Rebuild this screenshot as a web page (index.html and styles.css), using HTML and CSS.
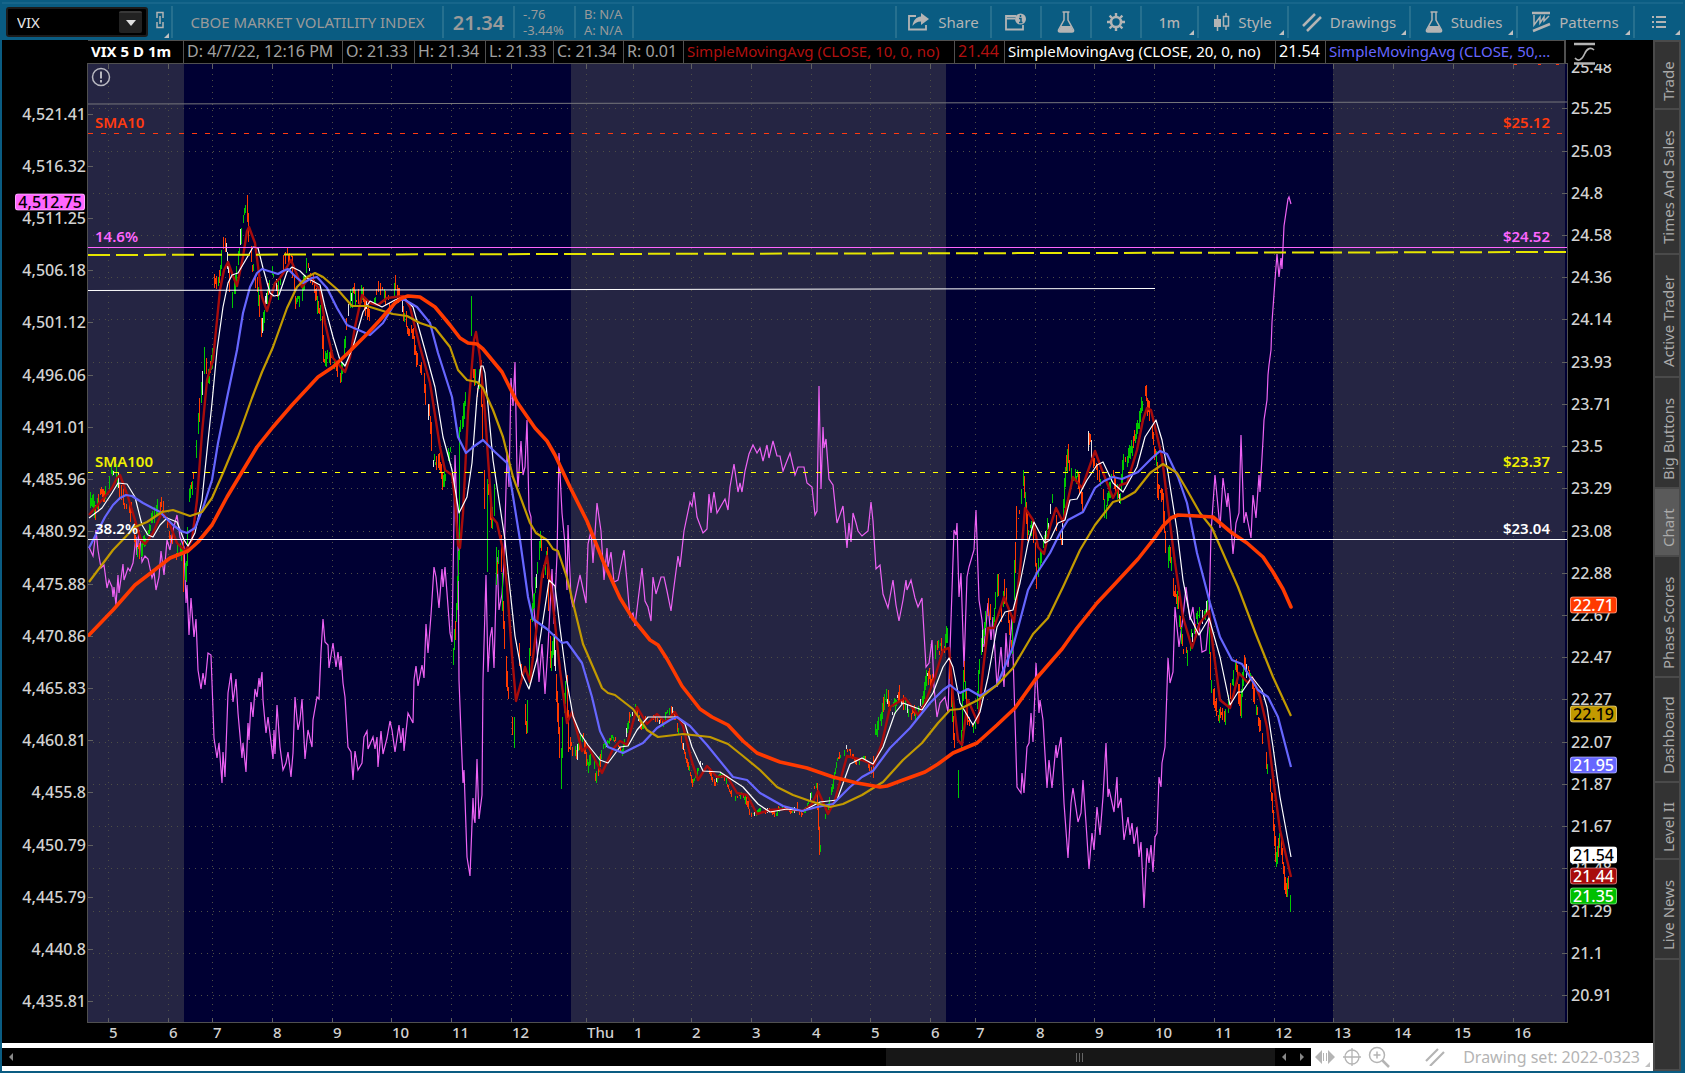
FILE: index.html
```html
<!DOCTYPE html>
<html lang="en">
<head>
    <meta charset="UTF-8">
    <meta name="viewport" content="width=device-width, initial-scale=1.0">
    <title>VIX 5 D 1m</title>
    <link rel="stylesheet" href="styles.css">
</head>
<body>
    <header class="toolbar">
        <div class="tool symbol">
            <div class="symbol-box">
                <input type="text" id="symbol" value="VIX" aria-label="Symbol">
                <button type="button" class="drop" aria-label="Symbol list"></button>
            </div>
            <button type="button" class="link more" aria-label="Link">
                <svg width="8" height="18" viewBox="0 0 8 18"><path d="M1 7V1.500H7V7M1 11V16.500H7V11M4 5V13" fill="none" stroke="#b4b4b4" stroke-width="1.500"/></svg>
            </button>
        </div>
        <div class="tool name">CBOE MARKET VOLATILITY INDEX</div>
        <div class="tool last">21.34</div>
        <div class="tool pair change"><span>-.76</span><span>-3.44%</span></div>
        <div class="tool pair bid"><span>B: N/A</span><span>A: N/A</span></div>
        <div class="tool space"></div>
        <button type="button" class="tool share">
            <svg width="22" height="18" viewBox="0 0 22 18"><path d="M8 3H1V16.500H18V12" fill="none" stroke="#b4b4b4" stroke-width="1.800"/><path d="M13 0L21 6L13 12V8.500C9 8.500 7 10 4.500 13C5 8 8 4 13 3.600Z" fill="#b4b4b4"/></svg>
            Share
        </button>
        <button type="button" class="tool icon" aria-label="Info">
            <svg width="22" height="18" viewBox="0 0 22 18"><path d="M11 3H1V16.500H18V12M1 5.500H10" fill="none" stroke="#b4b4b4" stroke-width="1.800"/><circle cx="15.500" cy="6" r="5.500" fill="#b4b4b4"/><path d="M15.500 2V4M14 5.500H16V9.500M14 9.500H17.500" stroke="#0a5c82" stroke-width="1.500" fill="none"/></svg>
        </button>
        <button type="button" class="tool icon" aria-label="Study">
            <svg width="18" height="22" viewBox="0 0 18 22"><path d="M5.500 1H12.500M7 1V9L1.500 19Q1 21 3 21H15Q17 21 16.500 19L11 9V1" fill="none" stroke="#b4b4b4" stroke-width="1.500"/><path d="M4 15H14L17 21H1Z" fill="#b4b4b4"/></svg>
        </button>
        <button type="button" class="tool icon" aria-label="Settings">
            <svg width="20" height="20" viewBox="0 0 20 20"><circle cx="10" cy="10" r="5" fill="none" stroke="#b4b4b4" stroke-width="2.600"/><path d="M10 1V4M10 16V19M1 10H4M16 10H19M3.600 3.600L6 6M14 14L16.400 16.400M3.600 16.400L6 14M14 6L16.400 3.600" stroke="#b4b4b4" stroke-width="2.400"/></svg>
        </button>
        <button type="button" class="tool minute more">1m</button>
        <button type="button" class="tool style more">
            <svg width="16" height="18" viewBox="0 0 16 18"><path d="M3.500 2V18M12 0V3M12 13V17" stroke="#b4b4b4" stroke-width="1.500"/><path d="M0 6H7V14H0Z" fill="#b4b4b4"/><path d="M9.500 3.500H14.500V13H9.500Z" fill="none" stroke="#b4b4b4" stroke-width="1.500"/></svg>
            Style
        </button>
        <button type="button" class="tool drawings more">
            <svg width="20" height="20" viewBox="0 0 20 20"><path d="M1 14L13 2M5 19L19 5" stroke="#b4b4b4" stroke-width="2.500"/></svg>
            Drawings
        </button>
        <button type="button" class="tool studies more">
            <svg width="18" height="22" viewBox="0 0 18 22"><path d="M5.500 1H12.500M7 1V9L1.500 19Q1 21 3 21H15Q17 21 16.500 19L11 9V1" fill="none" stroke="#b4b4b4" stroke-width="1.500"/><path d="M4 15H14L17 21H1Z" fill="#b4b4b4"/></svg>
            Studies
        </button>
        <button type="button" class="tool patterns more">
            <svg width="19" height="22" viewBox="0 0 19 22"><path d="M0 2H18M1 20L18 13" stroke="#b4b4b4" stroke-width="2.500"/><path d="M2 4V14L8 6V12L12 6V10L17 5" fill="none" stroke="#b4b4b4" stroke-width="1.500"/></svg>
            Patterns
        </button>
        <button type="button" class="tool menu more" aria-label="Menu">
            <svg width="14" height="14" viewBox="0 0 14 14"><path d="M0 2H2M4 2H14M0 7H2M4 7H14M0 12H2M4 12H14" stroke="#b4b4b4" stroke-width="1.800"/></svg>
        </button>
    </header>

    <main class="workspace">
        <section class="chart">
            <div class="corner"></div>
            <div class="info">
                <span class="title">VIX 5 D 1m</span>
                <span>D: 4/7/22, 12:16 PM</span>
                <span>O: 21.33</span>
                <span>H: 21.34</span>
                <span>L: 21.33</span>
                <span>C: 21.34</span>
                <span>R: 0.01</span>
                <span class="study sma10">SimpleMovingAvg (CLOSE, 10, 0, no)</span>
                <span class="sma10">21.44</span>
                <span class="study sma20">SimpleMovingAvg (CLOSE, 20, 0, no)</span>
                <span class="sma20">21.54</span>
                <span class="study sma50">SimpleMovingAvg (CLOSE, 50,...</span>
            </div>
            <div class="scale-icon">
                <svg width="22" height="24" viewBox="0 0 22 24"><path d="M0 2H21M0 21.500H21" stroke="#b4b4b4" stroke-width="2.500"/><path d="M1 16C4 20 8 18 10.500 12C13 6 17 5 20 8" fill="none" stroke="#b4b4b4" stroke-width="1.600"/></svg>
            </div>

            <div class="axis left" id="leftAxis"></div>
            <div class="plot" id="plot">
                <svg class="canvas" viewBox="88 64 1479 958" preserveAspectRatio="none">
                    <!-- extended hours -->
                    <g fill="#252543">
                        <rect x="88" y="64" width="96" height="958"/>
                        <rect x="571" y="64" width="375" height="958"/>
                        <rect x="1333" y="64" width="232" height="958"/>
                    </g>
                    <g id="grid"></g>

                    <!-- /ES overlay -->
                    <polyline class="es" points="89,547 93,556 96,530 98,550 101,568 104,565 107,588 109,580 112,587 113,597 114,587 116,605 118,575 119,593 123,564 124,580 128,568 130,571 133,563 136,537 137,555 139,530 141,547 142,562 145,556 148,559 152,578 154,572 156,590 159,577 161,551 164,575 167,540 170,550 173,530 177,515 180,537 184,547 186,603 187,585 189,635 191,598 194,637 196,619 198,670 201,689 203,673 205,685 208,653 211,655 214,738 217,758 219,743 222,783 223,752 225,777 228,693 231,673 233,702 236,679 238,713 242,758 243,743 246,772 248,723 249,740 251,702 253,717 255,689 257,697 259,678 260,687 262,672 263,700 266,733 268,717 273,759 274,730 275,754 277,705 280,747 283,770 286,763 288,752 291,777 293,753 295,697 298,730 300,720 302,699 305,759 308,730 312,747 313,720 317,697 319,699 321,652 323,619 325,642 328,645 329,668 333,643 336,667 338,652 340,670 341,656 343,683 345,697 348,747 351,752 353,780 355,751 358,770 362,763 364,737 367,731 368,749 373,737 375,749 377,737 378,767 381,731 383,754 387,738 390,721 392,730 395,752 399,725 401,743 403,728 404,751 408,713 413,723 414,680 416,666 418,686 422,665 424,678 426,624 428,653 431,615 434,567 436,577 439,608 442,569 443,587 445,567 447,593 450,633 452,642 455,455 458,540 459,680 461,733 463,783 464,770 467,857 470,876 473,798 474,818 475,823 477,759 479,819 482,795 483,680 486,575 488,672 490,638 492,627 494,668 497,557 499,610 502,594 504,563 507,452 509,487 511,378 513,406 515,362 517,471 518,487 521,441 523,475 525,467 527,420 529,510 531,517 532,586 536,632 539,682 542,644 545,694 548,647 552,569 554,624 557,555 559,453 562,513 565,544 567,590 568,525 571,598 573,607 580,575 586,603 588,544 591,531 593,563 597,503 601,531 604,580 607,548 608,567 611,552 614,582 618,580 624,550 627,582 630,617 633,613 635,626 637,609 642,568 645,601 648,607 651,621 653,577 656,594 661,577 664,577 667,591 671,611 673,594 678,556 680,567 684,531 690,502 692,506 694,492 697,517 703,533 707,529 709,494 711,513 714,492 717,513 725,499 728,510 730,487 734,464 738,492 740,483 742,492 745,471 749,454 753,445 757,453 760,448 763,461 767,445 769,458 773,441 777,456 780,456 783,471 790,453 795,475 798,467 804,467 807,483 812,487 815,515 817,511 819,386 821,489 823,427 824,448 826,439 829,479 833,485 837,523 843,506 847,548 849,523 851,542 853,513 856,523 858,531 862,536 868,531 871,502 873,521 876,569 880,565 883,594 888,608 893,580 896,605 899,621 903,600 906,580 907,590 911,580 915,598 918,607 922,598 926,667 929,663 932,640 934,687 937,717 940,703 945,697 948,713 951,620 954,530 956,535 957,523 959,597 961,573 964,667 967,577 969,567 974,550 976,510 979,600 982,620 984,647 988,603 991,640 993,617 997,687 1001,647 1004,687 1006,633 1008,667 1012,617 1013,653 1016,753 1017,787 1021,793 1022,773 1024,793 1027,747 1029,743 1031,713 1033,742 1036,663 1039,713 1040,700 1043,720 1047,788 1049,760 1052,788 1056,745 1057,758 1061,737 1064,803 1068,858 1071,803 1073,788 1078,822 1081,813 1083,780 1086,823 1089,869 1092,833 1094,850 1097,807 1100,835 1103,797 1106,743 1108,797 1109,789 1114,812 1117,777 1118,808 1121,798 1124,840 1128,817 1130,835 1132,823 1134,844 1137,827 1139,857 1141,842 1144,908 1147,848 1149,863 1151,845 1153,872 1155,837 1157,833 1159,777 1161,787 1162,763 1165,747 1168,658 1170,683 1173,672 1175,607 1179,647 1183,617 1186,587 1190,620 1193,607 1196,637 1199,623 1202,652 1206,650 1209,617 1211,533 1215,475 1220,528 1223,478 1227,507 1228,493 1230,513 1233,554 1236,523 1239,513 1241,435 1244,523 1246,512 1251,538 1253,495 1256,518 1259,475 1260,492 1263,440 1264,420 1267,400 1268,375 1269,365 1271,350 1272,322 1275,280 1277,254 1279,277 1281,258 1282,269 1284,226 1288,199 1289,197 1291,204"/>

                    <g id="candles"></g>

                    <!-- moving averages 10, 20, 50, 100, 200 -->
                    <polyline class="avg a10" points="89,515 102,500 112,488 117,478 120,475 128,497 135,520 141,540 145,544 153,533 162,512 168,520 177,543 185,551 192,540 197,500 202,433 207,380 213,360 220,290 224,270 228,262 233,276 237,286 243,257 247,231 249,227 255,243 262,297 267,311 275,283 280,278 287,267 291,260 297,275 302,287 310,277 320,290 325,323 333,358 345,372 350,357 355,327 362,295 370,303 378,305 387,298 403,296 410,307 420,347 430,383 440,447 445,470 452,475 455,500 458,545 460,548 463,513 468,413 474,340 476,332 480,357 485,413 492,517 497,523 503,550 507,586 512,655 516,701 525,667 530,682 537,624 542,575 547,556 553,605 560,670 567,723 572,712 582,751 588,746 602,773 613,749 620,741 627,745 637,707 647,724 657,714 665,722 675,712 683,726 692,762 698,780 707,766 717,777 727,776 737,793 747,795 757,814 770,810 787,809 803,811 812,804 818,791 823,802 828,814 835,800 847,756 862,760 874,765 882,743 890,707 905,698 918,715 925,703 935,677 943,650 949,648 953,697 958,740 962,745 968,700 978,723 983,670 988,628 994,628 1004,597 1014,622 1020,570 1025,508 1033,520 1038,547 1044,554 1050,527 1056,508 1063,522 1073,477 1082,488 1095,451 1102,470 1113,498 1120,485 1127,483 1137,450 1143,420 1147,408 1151,410 1155,427 1162,457 1168,507 1175,563 1183,617 1192,648 1200,623 1209,611 1213,647 1220,700 1230,708 1239,673 1248,683 1252,677 1260,697 1267,727 1273,777 1280,830 1291,877"/>
                    <polyline class="avg a20" points="89,518 102,508 112,493 118,483 127,484 135,497 142,525 148,535 153,537 160,525 167,518 177,522 184,540 188,546 195,533 202,500 205,470 212,403 217,350 223,307 228,283 232,275 238,273 248,256 253,247 258,248 263,268 270,293 274,296 279,295 287,272 292,267 300,271 307,278 320,285 325,307 333,337 340,360 345,366 353,347 363,312 370,301 382,307 395,300 403,297 413,307 425,350 435,387 443,437 452,470 459,513 467,497 472,463 477,397 481,366 483,366 485,373 493,460 505,540 508,571 515,636 522,674 529,689 537,659 547,594 549,580 555,586 560,628 567,682 573,716 580,733 588,745 600,760 608,763 620,747 628,746 637,730 648,717 677,717 685,724 692,747 703,771 720,772 743,787 758,804 770,812 787,809 803,811 820,802 837,800 850,764 862,758 873,764 883,747 895,713 903,703 922,710 933,693 943,667 949,658 953,667 960,703 973,725 980,712 988,677 997,627 1005,612 1013,610 1020,583 1028,543 1034,522 1045,543 1050,540 1058,523 1065,520 1070,500 1077,499 1087,480 1097,465 1103,462 1113,483 1123,492 1137,467 1145,437 1156,420 1162,440 1168,473 1177,530 1183,580 1190,617 1199,635 1209,618 1220,657 1230,705 1238,692 1242,692 1252,677 1262,690 1267,707 1273,747 1280,797 1291,857"/>
                    <polyline class="avg a50" points="89,548 105,517 113,505 120,498 126,495 132,496 143,503 160,512 173,525 181,531 187,533 195,528 203,508 212,480 218,443 227,398 237,350 243,313 250,287 257,273 262,269 278,274 283,271 288,269 296,277 303,283 312,278 317,277 327,288 337,308 347,325 370,335 383,323 395,303 400,300 405,300 417,307 430,323 438,353 452,397 458,437 466,453 473,447 483,440 495,452 507,463 512,490 520,540 528,597 533,619 547,629 562,643 567,642 582,663 592,697 600,731 608,747 623,753 643,743 657,728 670,720 677,717 690,726 707,745 733,777 747,780 760,793 783,806 802,811 817,807 833,804 850,787 862,777 873,771 890,748 910,728 930,703 943,690 950,685 960,693 968,689 980,696 997,685 1013,647 1028,590 1037,573 1050,553 1060,533 1068,520 1083,512 1095,488 1104,481 1113,477 1122,479 1138,472 1152,458 1160,451 1167,454 1178,477 1187,503 1197,553 1210,603 1220,637 1232,660 1242,664 1258,690 1268,697 1278,717 1291,767"/>
                    <polyline class="avg a100" points="89,582 113,550 135,527 147,522 162,512 173,510 190,516 202,512 212,498 223,473 238,437 252,398 262,372 273,347 287,308 297,287 307,277 315,273 323,277 338,290 352,306 367,306 383,311 393,314 407,316 420,323 435,328 450,347 458,370 467,380 477,382 483,388 493,410 503,437 513,477 530,523 536,533 547,540 553,549 558,551 567,578 583,644 602,688 608,693 615,695 633,709 647,730 658,737 683,734 710,737 728,744 743,756 760,770 777,787 793,795 810,801 830,807 843,804 862,795 883,782 903,760 922,743 938,723 950,710 960,709 978,700 997,685 1013,668 1033,634 1048,618 1063,587 1080,550 1095,525 1113,502 1123,499 1135,492 1150,473 1163,464 1177,473 1187,490 1200,513 1212,528 1223,553 1238,587 1255,632 1273,677 1291,716"/>
                    <polyline class="avg a200" points="89,635 113,610 135,585 152,572 170,558 188,551 198,542 212,525 227,497 242,472 257,447 273,427 292,405 318,377 333,367 348,353 367,334 380,320 395,303 402,298 408,296 420,297 435,307 450,325 460,338 468,343 477,344 483,349 502,372 517,402 535,428 547,441 555,455 570,487 587,521 603,561 620,598 633,619 650,640 658,645 667,659 682,686 700,709 712,717 728,725 743,741 757,753 780,762 807,768 833,777 857,783 880,787 887,786 903,780 925,772 938,764 953,753 977,743 997,725 1015,708 1035,680 1062,649 1077,628 1097,603 1113,586 1138,559 1153,540 1163,526 1171,518 1178,515 1197,516 1213,517 1232,533 1247,543 1263,557 1273,572 1283,589 1291,607"/>

                    <!-- price levels -->
                    <path class="level" stroke="#77777c" d="M88 104L1567 102"/>
                    <path class="level" stroke="#ff3a10" stroke-dasharray="5 8" d="M88 133.500H1567"/>
                    <path class="level" stroke="#ff66ff" d="M88 247.500H1567"/>
                    <path class="level band" d="M88 255L1567 252"/>
                    <path class="level" stroke="#ffffff" d="M88 290.500L1155 288.500"/>
                    <path class="level" stroke="#ffff00" stroke-dasharray="5 8" d="M88 472.500H1567"/>
                    <path class="level" stroke="#ffffff" d="M88 539.500H1567"/>
                    <path class="level" stroke="#ff3a10" d="M1514 64.500H1517M1538 64.500H1541M1556 64.500H1559"/>
                </svg>
                <svg class="alert" width="20" height="20" viewBox="0 0 20 20"><circle cx="10" cy="10" r="8.500" fill="none" stroke="#b8b8c0" stroke-width="1.500"/><path d="M10 4.500V11.500M10 13V15.500" stroke="#b8b8c0" stroke-width="2"/></svg>
            </div>
            <div class="axis right" id="rightAxis"></div>

            <div class="corner"></div>
            <div class="times" id="timeAxis"></div>
            <div class="corner"></div>
        </section>

        <footer class="bottom">
            <div class="scroll">
                <button type="button" class="arrow prev" aria-label="Scroll left"></button>
                <div class="track"><div class="thumb"></div></div>
                <button type="button" class="arrow prev" aria-label="Step left"></button>
                <button type="button" class="arrow next" aria-label="Step right"></button>
            </div>
            <button type="button" class="foot-icon" aria-label="Fit">
                <svg width="20" height="16" viewBox="0 0 20 16"><path d="M7 1V15L0 8ZM13 1V15L20 8Z" fill="#b4b4b4"/><path d="M8.500 4V12M11.500 4V12" stroke="#b4b4b4"/></svg>
            </button>
            <button type="button" class="foot-icon" aria-label="Crosshair">
                <svg width="18" height="18" viewBox="0 0 18 18"><circle cx="9" cy="9" r="7" fill="none" stroke="#b4b4b4" stroke-width="1.300"/><path d="M9 0V18M0 9H18" stroke="#b4b4b4" stroke-width="1.300"/></svg>
            </button>
            <button type="button" class="foot-icon" aria-label="Zoom in">
                <svg width="22" height="22" viewBox="0 0 22 22"><circle cx="9" cy="9" r="7.500" fill="none" stroke="#b4b4b4" stroke-width="1.500"/><path d="M9 5.500V12.500M5.500 9H12.500" stroke="#b4b4b4" stroke-width="1.500"/><path d="M14.500 14.500L21 21" stroke="#b4b4b4" stroke-width="2.500"/></svg>
            </button>
            <button type="button" class="set more">
                <svg width="20" height="18" viewBox="0 0 20 18"><path d="M1 13L13 1M5 18L19 4" stroke="#b4b4b4" stroke-width="2.200"/></svg>
                Drawing set: 2022-0323
            </button>
        </footer>
    </main>

    <nav class="tabs">
        <button type="button" class="t66">Trade</button>
        <button type="button" class="t143">Times And Sales</button>
        <button type="button" class="t121">Active Trader</button>
        <button type="button" class="t109">Big Buttons</button>
        <button type="button" class="t66 active">Chart</button>
        <button type="button" class="t119">Phase Scores</button>
        <button type="button" class="t103">Dashboard</button>
        <button type="button" class="t75">Level II</button>
        <button type="button" class="t98">Live News</button>
        <div class="rest"></div>
    </nav>

    <script src="chart.js"></script>
</body>
</html>
```
FILE: styles.css
```css
* {
    box-sizing: border-box;
}
body {
    margin: 0;
    height: 100vh;
    padding: 0 2px 2px;
    display: grid;
    grid-template-columns: minmax(0, 1fr) 30px;
    grid-template-rows: 40px minmax(0, 1fr);
    background-color: #0a5c82;
    font-family: "Noto Sans", "Open Sans", sans-serif;
    font-size: 16px;
    color: #d2d2d2;
    overflow: hidden;
}
button, input {
    font: inherit;
    color: inherit;
    background: none;
    border: none;
    padding: 0;
    margin: 0;
}
button {
    cursor: pointer;
}

/* top toolbar */
.toolbar {
    grid-column: 1 / 3;
    display: flex;
    padding: 4px 0 2px;
    border-top: 2px solid #0a5c82;
    box-shadow: inset 0 2px 0 #17668b;
    color: #b4b4b4;
}
.tool {
    display: flex;
    align-items: center;
    justify-content: center;
    gap: 8px;
    flex-shrink: 0;
    border-right: 2px solid #26708f;
    white-space: nowrap;
}
.more {
    position: relative;
}
.more::after {
    content: "";
    position: absolute;
    right: 3px;
    bottom: 3px;
    border-left: 5px solid transparent;
    border-bottom: 5px solid #c0c0c0;
}
.symbol {
    width: 171px;
    justify-content: flex-start;
    gap: 3px;
    padding-left: 4px;
}
.symbol-box {
    display: flex;
    align-items: center;
    width: 142px;
    height: 30px;
    padding: 2px 4px 2px 9px;
    background-color: #000;
    border: 2px solid #1c1c1c;
    border-radius: 3px;
}
.symbol-box input {
    flex: 1;
    min-width: 0;
    font-size: 15px;
    color: #e6e6e6;
}
.drop {
    display: grid;
    place-items: center;
    width: 23px;
    height: 22px;
    background-color: #222;
    border-top: 2px solid #383838;
    border-radius: 2px;
}
.drop::before {
    content: "";
    border: 5px solid transparent;
    border-top: 6px solid #e0e0e0;
    border-bottom: 0;
}
.link {
    width: 18px;
    height: 32px;
}
.link::after {
    right: 0;
    bottom: 0;
}
.name {
    width: 271px;
    font-size: 15px;
    color: #9a9a9a;
}
.last {
    width: 71px;
    font-size: 20px;
    font-weight: 600;
    color: #9a9a9a;
}
.pair {
    flex-direction: column;
    align-items: flex-start;
    gap: 0;
    padding-left: 8px;
    font-size: 13px;
    line-height: 16px;
    color: #9a9a9a;
}
.change {
    width: 61px;
}
.bid {
    width: 58px;
}
.space {
    flex: 1;
}
.share {
    width: 95px;
}
.icon {
    width: 50px;
}
.minute {
    width: 57px;
    font-size: 14px;
    font-weight: 500;
}
.style {
    width: 90px;
}
.drawings {
    width: 122px;
}
.studies {
    width: 107px;
}
.patterns {
    width: 117px;
}
.menu {
    width: 48px;
    border-right: none;
}
.tool.share, .style, .drawings, .studies, .patterns {
    font-size: 15px;
}

/* chart area */
.workspace {
    display: flex;
    flex-direction: column;
    min-width: 0;
    background-color: #fff;
}
.chart {
    flex: 1;
    min-height: 0;
    display: grid;
    grid-template-columns: 86px minmax(0, 1fr) 86px;
    grid-template-rows: 24px minmax(0, 1fr) 21px;
    background-color: #000;
}
.info {
    display: grid;
    grid-template-columns: 96px 159px 72px 71px 68px 70px 60px 271px 50px 271px 50px minmax(0, 1fr);
    border: 1px solid #505050;
    border-left-width: 0;
    font-size: 16px;
    line-height: 21px;
    color: #a0a0a0;
    margin-right: 1px;
}
.info span {
    padding-left: 3px;
    border-right: 1px solid #505050;
    white-space: nowrap;
    overflow: hidden;
}
.info .title {
    font-size: 15px;
    font-weight: 700;
    color: #fff;
}
.info .study {
    font-size: 15px;
}
.info .sma10 {
    color: #b01010;
}
.info .sma20 {
    color: #fff;
}
.info .sma50 {
    color: #6666ff;
}
.scale-icon {
    position: relative;
    z-index: 1;
    padding: 2px 0 0 7px;
}
.plot {
    position: relative;
    background-color: #000033;
    outline: 1px solid #505050;
}
.canvas {
    display: block;
    width: 100%;
    height: 100%;
}
.alert {
    position: absolute;
    left: 3px;
    top: 3px;
}
.grid-line {
    fill: none;
    stroke: #4e4e46;
    stroke-dasharray: 1 5;
}
.tick {
    fill: none;
    stroke: #606060;
}
.es {
    fill: none;
    stroke: #ee62f4;
    stroke-width: 1.2;
}
.candle {
    fill: none;
    stroke-width: 1;
    shape-rendering: crispEdges;
}
.up {
    stroke: #00c800;
}
.down {
    stroke: #ff3a00;
}
.flat {
    stroke: #e0e0e0;
}
.avg {
    fill: none;
    stroke-linejoin: round;
}
.a10 {
    stroke: #a80c0c;
    stroke-width: 2.4;
}
.a20 {
    stroke: #fff;
    stroke-width: 1.2;
}
.a50 {
    stroke: #6666ff;
    stroke-width: 2.2;
}
.a100 {
    stroke: #c29a00;
    stroke-width: 2.2;
}
.a200 {
    stroke: #ff3a00;
    stroke-width: 3.6;
    stroke-linecap: round;
}
.level {
    fill: none;
    stroke-width: 1;
}
.band {
    stroke: #e6e600;
    stroke-width: 2;
    stroke-dasharray: 22 6;
}
.note {
    position: absolute;
    left: 7px;
    font-size: 15px;
    font-weight: 600;
    line-height: 20px;
    transform: translateY(-50%);
}
.note.price {
    left: auto;
    right: 17px;
}

/* axes */
.axis {
    position: relative;
    overflow: hidden;
    font-weight: 500;
}
.axis span, .axis b {
    position: absolute;
    line-height: 17px;
    transform: translateY(-50%);
}
.left span {
    right: 2px;
}
.right span {
    left: 4px;
}
.times {
    font-size: 15px;
}
.axis b {
    padding: 0 2px;
    border: 1px solid rgba(255, 255, 255, 0.4);
    border-radius: 3px;
    font-weight: 500;
    line-height: 15px;
}
.left b {
    right: 3px;
}
.right b {
    left: 3px;
}
.times {
    position: relative;
    border-top: 1px solid #505050;
    font-weight: 500;
    line-height: 19px;
}
.times span {
    position: absolute;
    padding-left: 1px;
}

/* scrollbar and drawing set */
.bottom {
    display: flex;
    align-items: center;
    height: 28px;
    color: #b4b4b4;
}
.scroll {
    flex: 1;
    display: flex;
    align-items: center;
    height: 18px;
    background-color: #000;
}
.track {
    flex: 1;
    height: 100%;
    display: flex;
    justify-content: flex-end;
}
.thumb {
    width: 31%;
    background: repeating-linear-gradient(90deg, #666 0 1px, transparent 1px 3px) center / 8px 9px no-repeat #171717;
}
.arrow {
    width: 18px;
    height: 18px;
    display: grid;
    place-items: center;
}
.arrow::before {
    content: "";
    border: 4px solid transparent;
}
.prev::before {
    border-right: 4px solid #888;
    border-left: 0;
}
.next::before {
    border-left: 4px solid #888;
    border-right: 0;
}
.foot-icon {
    display: grid;
    place-items: center;
    width: 27px;
    height: 28px;
}
.set {
    display: flex;
    align-items: center;
    justify-content: flex-end;
    gap: 18px;
    width: 261px;
    height: 26px;
    padding-right: 13px;
}

/* side tabs */
.tabs {
    display: flex;
    flex-direction: column;
    gap: 2px;
    padding: 2px;
    background-color: #4a4a4a;
    border-right: 2px solid #0a5c82;
}
.tabs button {
    writing-mode: vertical-rl;
    transform: rotate(180deg);
    padding-bottom: 12px;
    background-color: #333;
    color: #aaa;
    font-size: 15px;
    line-height: 26px;
    flex-shrink: 0;
}
.tabs .active {
    background-color: #5a5a5a;
}
.t66 {
    height: 66px;
}
.t75 {
    height: 75px;
}
.t98 {
    height: 98px;
}
.t103 {
    height: 103px;
}
.t109 {
    height: 109px;
}
.t119 {
    height: 119px;
}
.t121 {
    height: 121px;
}
.t143 {
    height: 143px;
}
.rest {
    flex: 1;
    background-color: #333;
}
```
FILE: chart.js
```js
// chart space, same as the svg viewBox
const X0 = 88, Y0 = 64, W = 1479, H = 958;
const NS = 'http://www.w3.org/2000/svg';

const times = [
    ['5', 108], ['6', 168], ['7', 212], ['8', 272], ['9', 332], ['10', 391], ['11', 451], ['12', 511],
    ['Thu', 586], ['1', 633], ['2', 691], ['3', 751], ['4', 811], ['5', 870], ['6', 930], ['7', 975],
    ['8', 1035], ['9', 1094], ['10', 1154], ['11', 1214], ['12', 1274], ['13', 1333], ['14', 1393],
    ['15', 1453], ['16', 1513]
];
const prices = [
    ['25.48', 67], ['25.25', 108], ['25.03', 151], ['24.8', 193], ['24.58', 235], ['24.36', 277],
    ['24.14', 319], ['23.93', 362], ['23.71', 404], ['23.5', 446], ['23.29', 488], ['23.08', 531],
    ['22.88', 573], ['22.67', 615], ['22.47', 657], ['22.27', 699], ['22.07', 742], ['21.87', 784],
    ['21.67', 826], ['21.48', 868], ['21.29', 911], ['21.1', 953], ['20.91', 995]
];
const esPrices = [
    ['4,521.41', 114], ['4,516.32', 166], ['4,511.25', 218], ['4,506.18', 270], ['4,501.12', 322],
    ['4,496.06', 375], ['4,491.01', 427], ['4,485.96', 479], ['4,480.92', 531], ['4,475.88', 584],
    ['4,470.86', 636], ['4,465.83', 688], ['4,460.81', 740], ['4,455.8', 792], ['4,450.79', 845],
    ['4,445.79', 897], ['4,440.8', 949], ['4,435.81', 1001]
];
const tags = [
    ['22.71', 605, '#ff3a00', '#fff'], ['22.19', 714, '#c29a00', '#000'], ['21.95', 765, '#6666ff', '#fff'],
    ['21.54', 855, '#fff', '#000'], ['21.44', 876, '#a80c0c', '#fff'], ['21.35', 896, '#00c000', '#fff']
];
const notes = [
    ['SMA10', '$25.12', 122, '#ff3a10'], ['14.6%', '$24.52', 236, '#ff66ff'],
    ['SMA100', '$23.37', 461, '#f0f000'], ['38.2%', '$23.04', 528, '#fff']
];

// x, y of the last price
const closes = '90,507 93,497 96,513 100,493 105,497 108,483 115,465 119,487 127,508 132,513 135,540 139,552 145,538 152,520 158,503 163,508 168,530 177,555 183,550 184,590 187,563 189,500 195,473 198,427 203,377 205,352 209,380 213,350 214,287 220,273 223,243 227,252 232,305 237,270 242,230 247,195 249,243 253,267 258,287 262,333 267,293 275,267 278,294 285,254 292,257 296,307 302,290 307,267 313,280 318,307 322,323 324,363 330,353 341,378 347,323 353,290 357,300 361,287 367,310 373,310 378,290 384,290 390,303 395,285 400,297 408,327 413,333 417,363 423,367 426,400 430,417 433,463 439,457 443,487 451,447 453,660 457,607 459,553 460,433 463,423 467,380 469,280 471,300 473,367 478,393 481,370 485,510 487,571 488,487 492,529 494,487 497,578 501,533 503,605 507,682 514,738 519,647 527,728 531,624 537,575 541,540 544,578 547,548 551,663 554,636 558,712 561,780 563,720 567,678 569,743 577,752 583,737 588,766 593,754 597,784 603,747 613,737 623,752 630,716 636,707 642,729 650,707 655,720 663,722 671,707 677,724 685,754 693,783 700,764 707,766 715,783 723,774 734,800 743,793 752,816 763,808 775,814 783,806 792,812 797,806 802,814 807,806 817,783 820,850 824,823 828,808 833,785 837,760 846,749 850,751 858,764 865,758 873,772 875,735 887,696 892,712 898,695 908,713 915,713 922,703 927,673 932,683 936,646 943,650 948,635 952,703 956,765 958,790 962,730 964,670 968,720 973,728 976,720 979,670 983,637 988,607 993,627 998,582 1002,620 1005,585 1012,650 1014,593 1017,515 1020,517 1024,476 1028,533 1033,523 1037,580 1040,560 1047,530 1053,500 1057,523 1062,540 1065,483 1068,450 1072,487 1078,473 1082,505 1085,463 1089,433 1095,467 1102,483 1105,515 1113,475 1120,500 1124,462 1130,453 1137,433 1145,388 1148,405 1152,433 1157,463 1158,487 1163,497 1167,573 1170,550 1174,587 1178,603 1183,647 1187,655 1197,617 1203,613 1208,606 1211,680 1217,715 1225,720 1232,683 1236,664 1241,715 1244,664 1252,677 1255,703 1259,720 1265,747 1270,783 1273,807 1276,860 1280,833 1284,867 1286,893 1288,883 1291,905'
    .split(' ').map(p => p.split(',').map(Number));

function draw(parent, cls, d) {
    const path = document.createElementNS(NS, 'path');
    path.setAttribute('class', cls);
    path.setAttribute('d', d);
    parent.appendChild(path);
}

function label(parent, text, side, value, tag) {
    const el = document.createElement(tag || 'span');
    el.textContent = text;
    el.style[side] = value + '%';
    parent.appendChild(el);
    return el;
}

const toX = x => (x - X0) / W * 100;
const toY = y => (y - Y0) / H * 100;

// grid and ticks
const grid = document.getElementById('grid');
let rows = '', cols = '', ticks = '';
prices.slice(1).forEach(([, y]) => {
    rows += `M93 ${y + 0.5}H1553`;
    ticks += `M1562 ${y + 0.5}H1567`;
});
times.forEach(([, x]) => {
    cols += `M${x + 0.5} 74V1012`;
    ticks += `M${x + 0.5} 64V69M${x + 0.5} 1018V1022`;
});
esPrices.forEach(([, y]) => ticks += `M88 ${y + 0.5}H93`);
draw(grid, 'grid-line', rows);
draw(grid, 'grid-line', cols);
draw(grid, 'tick', ticks);

// one minute bars
const paths = { down: '', up: '', flat: '' };
let seed = 7;
function rand() {
    seed = (seed * 16807) % 2147483647;
    return seed / 2147483647;
}
for (let i = 1; i < closes.length; i++) {
    const [xa, ya] = closes[i - 1];
    const [xb, yb] = closes[i];
    const n = xb - xa;
    for (let k = 0; k < n; k++) {
        const from = ya + (yb - ya) * k / n;
        const to = ya + (yb - ya) * (k + 1) / n;
        const calm = xa > 600 && xa < 870 ? 3 : 7;
        const mid = (from + to) / 2 + (rand() - 0.5) * calm * 1.5;
        const half = Math.abs(to - from) / 2 + rand() * calm;
        let kind = to < from ? 'up' : 'down';
        if (rand() < 0.15) kind = kind === 'up' ? 'down' : 'up';
        if (rand() < 0.07) kind = 'flat';
        if (rand() < 0.3) continue;
        paths[kind] += `M${xa + k + 0.5} ${(mid - half).toFixed(1)}V${(mid + half).toFixed(1)}`;
    }
}
const candles = document.getElementById('candles');
Object.keys(paths).forEach(kind => draw(candles, 'candle ' + kind, paths[kind]));

// labels
const leftAxis = document.getElementById('leftAxis');
const rightAxis = document.getElementById('rightAxis');
const timeAxis = document.getElementById('timeAxis');
const plot = document.getElementById('plot');

esPrices.forEach(([text, y]) => label(leftAxis, text, 'top', toY(y)));
prices.forEach(([text, y]) => label(rightAxis, text, 'top', toY(y)));
times.forEach(([text, x]) => label(timeAxis, text, 'left', toX(x)));

const es = label(leftAxis, '4,512.75', 'top', toY(202), 'b');
es.style.background = '#ff66ff';
es.style.color = '#000';
tags.forEach(([text, y, back, color]) => {
    const el = label(rightAxis, text, 'top', toY(y), 'b');
    el.style.background = back;
    el.style.color = color;
});
notes.forEach(([name, price, y, color]) => {
    const a = label(plot, name, 'top', toY(y));
    const b = label(plot, price, 'top', toY(y));
    a.className = 'note';
    b.className = 'note price';
    a.style.color = b.style.color = color;
});
```
